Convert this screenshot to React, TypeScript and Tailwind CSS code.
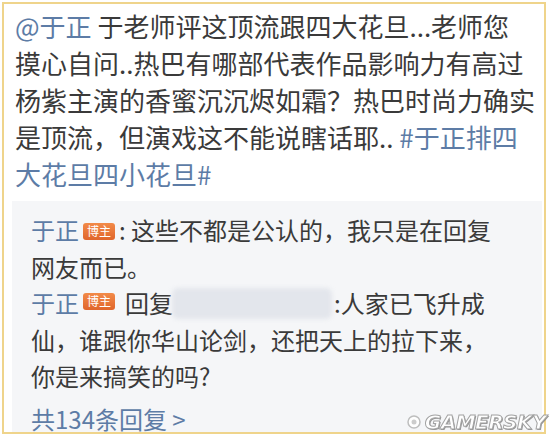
import React from "react";

const font = { fontFamily: '"Noto Sans CJK SC", "Noto Sans", sans-serif' };

function Badge() {
  return (
    <span className="inline-flex items-center justify-center align-middle w-[32px] h-[17px] rounded-[3px] bg-gradient-to-b from-[#f28a48] to-[#e0652b] text-white text-[12px] leading-none ml-[4px] mr-[4px] relative -top-[2px]">
      博主
    </span>
  );
}

export default function App() {
  return (
    <div className="w-[550px] h-[437px] bg-white overflow-hidden relative" style={font}>
      <div className="ml-[2px] mt-[2px] w-[544px] h-[432px] border-2 border-[#efd48b] flex flex-col overflow-hidden">
        {/* Post text */}
        <div className="pl-[11px] pt-[3px] text-[26px] leading-[37px] text-[#3a3a3a] whitespace-nowrap">
          <div>
            <span className="text-[#5d7ca6]">@于正</span> 于老师评这顶流跟四大花旦...老师您
          </div>
          <div>摸心自问..热巴有哪部代表作品影响力有高过</div>
          <div>杨紫主演的香蜜沉沉烬如霜？热巴时尚力确实</div>
          <div>
            是顶流，但演戏这不能说瞎话耶.. <span className="text-[#5d7ca6]">#于正排四</span>
          </div>
          <div className="text-[#5d7ca6]">大花旦四小花旦#</div>
        </div>

        {/* Replies */}
        <div className="mt-[9px] ml-[8px] mr-[2px] flex-1 bg-[#f5f6f8] pl-[19px] pt-[11px] text-[24px] leading-[36.5px] text-[#3a3a3a] whitespace-nowrap">
          <div>
            <span className="text-[#5d7ca6]">于正</span>
            <Badge />
            : 这些不都是公认的，我只是在回复
          </div>
          <div>网友而已。</div>
          <div className="flex items-center">
            <span className="text-[#5d7ca6]">于正</span>
            <Badge />
            <span className="ml-[6px]">回复</span>
            <span className="inline-block w-[160px] h-[31px] bg-[#e3e6ec] rounded-[6px] blur-[2px] ml-[-1px] mr-[2px]"></span>
            <span>:人家已飞升成</span>
          </div>
          <div>仙，谁跟你华山论剑，还把天上的拉下来，</div>
          <div>你是来搞笑的吗?</div>
          <div className="mt-[6px] text-[#5d7ca6]">共134条回复 &gt;</div>
        </div>
      </div>

      {/* Watermark */}
      <div className="absolute right-[4px] bottom-[5px] flex items-center gap-[3px] opacity-90">
        <svg width="16" height="16" viewBox="0 0 16 16">
          <circle cx="8" cy="8" r="6" fill="#ffffff" stroke="#b8b8b8" strokeWidth="1.5" />
          <circle cx="8" cy="8" r="2.5" fill="#c8c8c8" />
        </svg>
        <span
          className="text-[20px] font-black italic leading-none tracking-[-0.5px] text-white"
          style={{
            fontFamily: '"DejaVu Sans", sans-serif',
            WebkitTextStroke: "1px #9a9a9a",
            textShadow: "1px 1px 0 #8a8a8a",
          }}
        >
          GAMERSKY
        </span>
      </div>
    </div>
  );
}
